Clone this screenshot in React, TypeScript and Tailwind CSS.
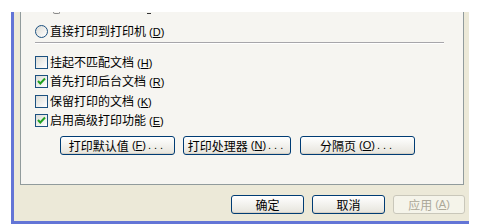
import React from "react";

const FONT = { fontFamily: '"Noto Sans CJK SC", "Noto Sans", sans-serif' };
const LATIN = { fontFamily: '"Liberation Sans", "DejaVu Sans", sans-serif' };

function Mn({ ch, gray }: { ch: string; gray?: boolean }) {
  return (
    <span className={`ml-[3px] text-[11px] ${gray ? "text-[#aca899]" : ""}`} style={LATIN}>
      (<span className="underline underline-offset-1">{ch}</span>)
    </span>
  );
}

function Check({ checked }: { checked?: boolean }) {
  return (
    <div className="w-[13px] h-[13px] border border-[#1c5180] bg-linear-to-br from-[#dcdcd7] to-white flex items-center justify-center shrink-0">
      {checked && (
        <svg width="11" height="11" viewBox="0 0 11 11">
          <path d="M2 5 L4.3 7.5 L9 2.5" fill="none" stroke="#21a121" strokeWidth="2" />
        </svg>
      )}
    </div>
  );
}

function CheckRow({ label, ch, checked, className = "" }: { label: string; ch: string; checked?: boolean; className?: string }) {
  return (
    <div className={`flex items-center h-[13px] ${className}`}>
      <Check checked={checked} />
      <span className="ml-[2px] text-[12px] leading-none text-black whitespace-nowrap" style={FONT}>
        {label}
        <Mn ch={ch} />
      </span>
    </div>
  );
}

function Btn({ children, w, disabled }: { children: React.ReactNode; w: string; disabled?: boolean }) {
  return (
    <div
      className={`${w} h-[19px] rounded-[3px] border flex items-center justify-center text-[12px] leading-none whitespace-nowrap ${
        disabled
          ? "border-[#c9c7ba] bg-[#f5f4ea] text-[#aca899]"
          : "border-[#003c74] bg-linear-to-b from-white to-[#e6e4dc] text-black shadow-[inset_0_-1px_0_#d6d0c5]"
      }`}
      style={FONT}
    >
      {children}
    </div>
  );
}

const Dots = () => (
  <span className="ml-[2px] tracking-[3px] text-[11px]" style={LATIN}>...</span>
);

export default function App() {
  return (
    <div className="w-[482px] h-[224px] bg-white pt-[12px] pl-[11px] overflow-hidden">
      <div className="w-[458px] h-[212px] border-l-[3px] border-b-[3px] border-[#6375d6] bg-[#ece9d8] flex flex-col">
        <div className="relative ml-[6px] w-[444px] h-[173px] border-x border-b border-[#919b9c] bg-[#f6f5f1] pl-[14px] flex flex-col shrink-0">
          <div className="absolute left-[32px] top-0 w-[7px] h-[2px] border-b border-x border-[#8a8a8a] rounded-b-full" />
          <div className="absolute left-[126px] top-[1px] w-[4px] h-px bg-[#333]" />

          <div className="flex items-center h-[13px] mt-[13px]">
            <div className="w-[13px] h-[13px] rounded-full border border-[#1c5180] bg-linear-to-br from-[#dcdcd7] to-white shrink-0" />
            <span className="ml-[2px] text-[12px] leading-none text-black whitespace-nowrap" style={FONT}>
              直接打印到打印机
              <Mn ch="D" />
            </span>
          </div>

          <div className="mt-[4px] w-[409px] h-px bg-[#a7a6aa] border-b border-white box-content" />

          <CheckRow className="mt-[12px]" label="挂起不匹配文档" ch="H" />
          <CheckRow className="mt-[6px]" label="首先打印后台文档" ch="R" checked />
          <CheckRow className="mt-[7px]" label="保留打印的文档" ch="K" />
          <CheckRow className="mt-[6px]" label="启用高级打印功能" ch="E" checked />

          <div className="flex mt-[9px] ml-[25px] gap-[8px]">
            <Btn w="w-[115px]">
              打印默认值<Mn ch="F" />
              <Dots />
            </Btn>
            <Btn w="w-[108px]">
              打印处理器<Mn ch="N" />
              <Dots />
            </Btn>
            <div className="ml-px">
              <Btn w="w-[115px]">
                分隔页<Mn ch="O" />
                <Dots />
              </Btn>
            </div>
          </div>
        </div>

        <div className="flex mt-[10px] ml-[217px] gap-[8px]">
          <Btn w="w-[73px]">确定</Btn>
          <Btn w="w-[73px]">取消</Btn>
          <Btn w="w-[72px]" disabled>
            应用<Mn ch="A" gray />
          </Btn>
        </div>
      </div>
    </div>
  );
}
